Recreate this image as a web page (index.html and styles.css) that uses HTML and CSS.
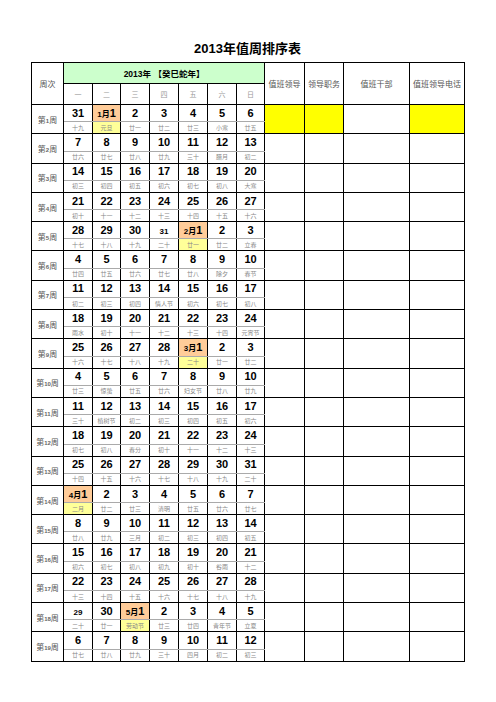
FILE: index.html
```html
<!DOCTYPE html>
<html lang="zh-CN">
<head>
<meta charset="utf-8">
<title>2013年值周排序表</title>
<link rel="stylesheet" href="styles.css">
</head>
<body>
<h1 class="title">2013年值周排序表</h1>
<table class="sheet">
<colgroup>
<col class="c-week"><col class="c-d1"><col class="c-d2"><col class="c-d3"><col class="c-d4"><col class="c-d5"><col class="c-d6"><col class="c-d7"><col class="c-r1"><col class="c-r2"><col class="c-r3"><col class="c-r4">
</colgroup>
<thead>
<tr class="h1">
<th rowspan="2" class="hd">周次</th>
<th colspan="7" class="year">2013年 【癸巳蛇年】</th>
<th rowspan="2" class="hd">值班领导</th>
<th rowspan="2" class="hd">领导职务</th>
<th rowspan="2" class="hd">值班干部</th>
<th rowspan="2" class="hd">值班领导电话</th>
</tr>
<tr class="h2">
<th class="wd">一</th><th class="wd">二</th><th class="wd">三</th><th class="wd">四</th><th class="wd">五</th><th class="wd">六</th><th class="wd">日</th>
</tr>
</thead>
<tbody id="body"></tbody>
</table>
<script src="app.js"></script>
</body>
</html>
```
FILE: app.js
```js
const weeks = [
  [["31","十九"],["!1月|1","元旦"],["2","廿一"],["3","廿二"],["4","廿三"],["5","小寒"],["6","廿五"]],
  [["7","廿六"],["8","廿七"],["9","廿八"],["10","廿九"],["11","三十"],["12","腊月"],["13","初二"]],
  [["14","初三"],["15","初四"],["16","初五"],["17","初六"],["18","初七"],["19","初八"],["20","大寒"]],
  [["21","初十"],["22","十一"],["23","十二"],["24","十三"],["25","十四"],["26","十五"],["27","十六"]],
  [["28","十七"],["29","十八"],["30","十九"],["~31","二十"],["!2月|1","廿一"],["2","廿二"],["3","立春"]],
  [["4","廿四"],["5","廿五"],["6","廿六"],["7","廿七"],["8","廿八"],["9","除夕"],["10","春节"]],
  [["11","初二"],["12","初三"],["13","初四"],["14","情人节"],["15","初六"],["16","初七"],["17","初八"]],
  [["18","雨水"],["19","初十"],["20","十一"],["21","十二"],["22","十三"],["23","十四"],["24","元宵节"]],
  [["25","十六"],["26","十七"],["27","十八"],["28","十九"],["!3月|1","二十"],["2","廿一"],["3","廿二"]],
  [["4","廿三"],["5","惊蛰"],["6","廿五"],["7","廿六"],["8","妇女节"],["9","廿八"],["10","廿九"]],
  [["11","三十"],["12","植树节"],["13","初二"],["14","初三"],["15","初四"],["16","初五"],["17","初六"]],
  [["18","初七"],["19","初八"],["20","春分"],["21","初十"],["22","十一"],["23","十二"],["24","十三"]],
  [["25","十四"],["26","十五"],["27","十六"],["28","十七"],["29","十八"],["30","十九"],["31","二十"]],
  [["!4月|1","二月"],["2","廿二"],["3","廿三"],["4","清明"],["5","廿五"],["6","廿六"],["7","廿七"]],
  [["8","廿八"],["9","廿九"],["10","三月"],["11","初二"],["12","初三"],["13","初四"],["14","初五"]],
  [["15","初六"],["16","初七"],["17","初八"],["18","初九"],["19","初十"],["20","谷雨"],["21","十二"]],
  [["22","十三"],["23","十四"],["24","十五"],["25","十六"],["26","十七"],["27","十八"],["28","十九"]],
  [["~29","二十"],["30","廿一"],["!5月|1","劳动节"],["2","廿三"],["3","廿四"],["4","青年节"],["5","立夏"]],
  [["6","廿七"],["7","廿八"],["8","廿九"],["9","三十"],["10","四月"],["11","初二"],["12","初三"]]
];
const body = document.getElementById("body");
let html = "";
weeks.forEach((w, i) => {
  const first = i === 0;
  html += '<tr class="num">';
  html += '<td rowspan="2" class="wk">第<span class="wn">' + (i + 1) + '</span>周</td>';
  w.forEach(([n]) => {
    if (n[0] === "!") {
      const [m, d] = n.slice(1).split("|");
      html += '<td class="n hi"><span class="mo">' + m + '</span>' + d + '</td>';
    } else if (n[0] === "~") {
      html += '<td class="n"><span class="sm">' + n.slice(1) + '</span></td>';
    } else {
      html += '<td class="n">' + n + '</td>';
    }
  });
  html += '<td rowspan="2" class="r' + (first ? ' yel' : '') + '"></td>';
  html += '<td rowspan="2" class="r' + (first ? ' yel' : '') + '"></td>';
  html += '<td rowspan="2" class="r"></td>';
  html += '<td rowspan="2" class="r' + (first ? ' yel' : '') + '"></td>';
  html += '</tr><tr class="lun">';
  w.forEach(([n, l]) => {
    html += '<td class="l' + (n[0] === "!" ? ' lhi' : '') + '">' + l + '</td>';
  });
  html += '</tr>';
});
body.innerHTML = html;
```
FILE: styles.css
```css
html, body {
  margin: 0;
  background: #fff;
}
body {
  font-family: "Liberation Sans", "Noto Sans CJK SC", sans-serif;
  color: #000;
}
.title {
  margin: 0;
  padding-top: 40px;
  height: 22px;
  line-height: 18px;
  font-size: 13px;
  font-weight: bold;
  text-align: center;
  width: 495px;
}
.sheet {
  margin-left: 31px;
  border-collapse: collapse;
  table-layout: fixed;
  width: 434px;
}
.c-week { width: 32px; }
.c-d1, .c-d3, .c-d4, .c-d5, .c-d6 { width: 29px; }
.c-d2, .c-d7 { width: 28px; }
.c-r1 { width: 40px; }
.c-r2 { width: 39px; }
.c-r3 { width: 66px; }
.c-r4 { width: 55px; }
.sheet th, .sheet td {
  border: 1px solid #000;
  padding: 0;
  text-align: center;
  vertical-align: middle;
  overflow: hidden;
  white-space: nowrap;
}
.h1 th, .h2 th { height: 20px; }
.hd {
  font-family: "Noto Sans CJK SC", sans-serif;
  font-weight: normal;
  font-size: 8px;
  color: #555;
}
.year {
  background: #ccffcc;
  font-family: "Liberation Sans", "Noto Sans CJK SC", sans-serif;
  font-size: 8.5px;
  font-weight: bold;
}
.wd {
  font-family: "Noto Sans CJK SC", sans-serif;
  font-weight: normal;
  font-size: 7px;
  color: #999;
}
.num td.n {
  height: 16.3px;
  font-size: 11px;
  font-weight: bold;
  line-height: 1;
  border-bottom-color: #aaa;
}
.lun td {
  height: 11px;
  font-family: "Noto Sans CJK SC", sans-serif;
  font-size: 6px;
  line-height: 1;
  color: #888;
  border-top-color: #aaa;
}
.wk {
  font-family: "Noto Sans CJK SC", sans-serif;
  font-size: 8px;
  color: #555;
}
.wn {
  font-family: "Liberation Sans", sans-serif;
  font-size: 6px;
  font-weight: bold;
  color: #666;
}
.hi { background: #ffcc99; }
.mo {
  font-size: 8px;
  font-family: "Liberation Sans", "Noto Sans CJK SC", sans-serif;
}
.sm { font-size: 8px; }
.lun td.lhi { background: #ffff99; }
.yel { background: #ffff00; }
```
